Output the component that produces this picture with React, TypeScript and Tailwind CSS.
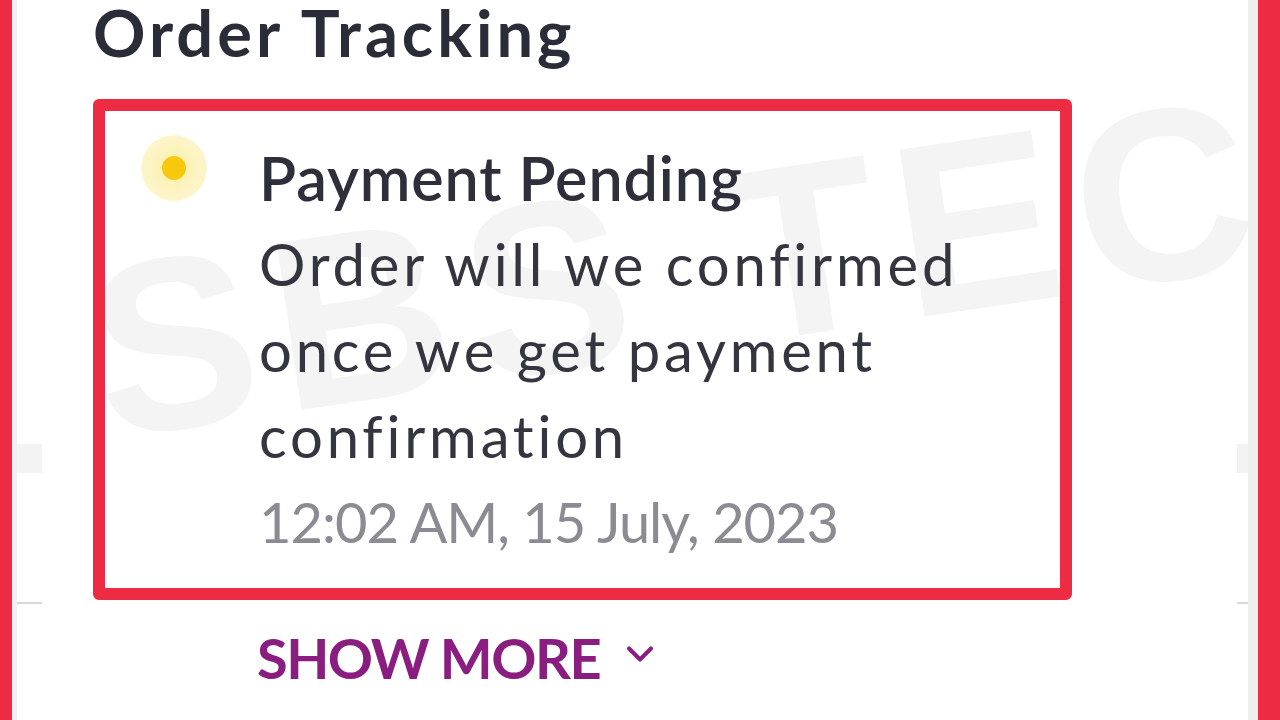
import { ChevronDown } from "lucide-react";

const font = { fontFamily: "Lato, 'Open Sans', sans-serif" };

const SideGutter = ({ width }: { width: string }) => (
  <div className={`flex flex-col ${width}`}>
    <div className="mt-[444px] h-[29px] bg-[#f3f3f4]" />
    <div className="mt-[129px] h-[2px] bg-[#d6d8dc]" />
  </div>
);

const StatusDot = () => (
  <div className="flex h-[66px] w-[66px] shrink-0 items-center justify-center rounded-full bg-[radial-gradient(circle,#fbf0a8_0%,#fcf4c4_55%,#fdf8dc_100%)]">
    <div className="h-[24px] w-[24px] rounded-full bg-[#f6c90e]" />
  </div>
);

export default function App() {
  return (
    <div
      className="relative flex h-[720px] w-[1280px] overflow-hidden bg-white [font-variant-ligatures:none]"
      style={font}
    >
      {/* faint diagonal watermark */}
      <div
        className="pointer-events-none absolute left-[106px] top-[232px] origin-[0%_85%] -rotate-[8.5deg] whitespace-nowrap text-[245px] font-bold leading-none tracking-[18px] text-[#f4f4f5]"
        style={{ fontFamily: "'Liberation Sans', Arial, sans-serif" }}
      >
        SBS TEC
      </div>

      <div className="relative w-[12px] shrink-0 bg-[#ed2b43]" />
      <div className="relative w-[5px] shrink-0 bg-[#f0f0f2]" />
      <SideGutter width="w-[25px] shrink-0" />

      <main className="relative flex flex-1 flex-col pl-[51px]">
        <h1 className="text-[65px] font-bold leading-[65px] tracking-[4px] text-[#2a2c37]">
          Order Tracking
        </h1>

        <section className="mt-[34px] flex w-[979px] rounded-[6px] border-[12px] border-[#ed2b43] pb-[23px] pl-[36px] pt-[24px]">
          <StatusDot />
          <div className="ml-[52px] flex flex-col">
            <p className="text-[61px] font-semibold leading-[86px] tracking-[0.9px] text-[#2e2f3a]">
              Payment Pending
            </p>
            <p className="text-[58px] leading-[86px] tracking-[3.8px] text-[#34353f]">
              Order will we confirmed
              <br />
              once we get payment
              <br />
              confirmation
            </p>
            <p className="text-[56px] leading-[86px] tracking-[-1px] text-[#8b8b94]">
              12:02 AM, 15 July, 2023
            </p>
          </div>
        </section>

        <button className="mt-[30px] flex w-fit items-center gap-[18px] pl-[164px] text-[56px] font-bold leading-[56px] tracking-[-1.5px] text-[#8a1d80]">
          SHOW MORE
          <ChevronDown size={44} strokeWidth={2.2} className="mb-[8px]" />
        </button>
      </main>

      <SideGutter width="w-[11px] shrink-0" />
      <div className="relative w-[10px] shrink-0 bg-[#eeeff1]" />
      <div className="relative w-[22px] shrink-0 bg-[#ed2b43]" />
    </div>
  );
}
